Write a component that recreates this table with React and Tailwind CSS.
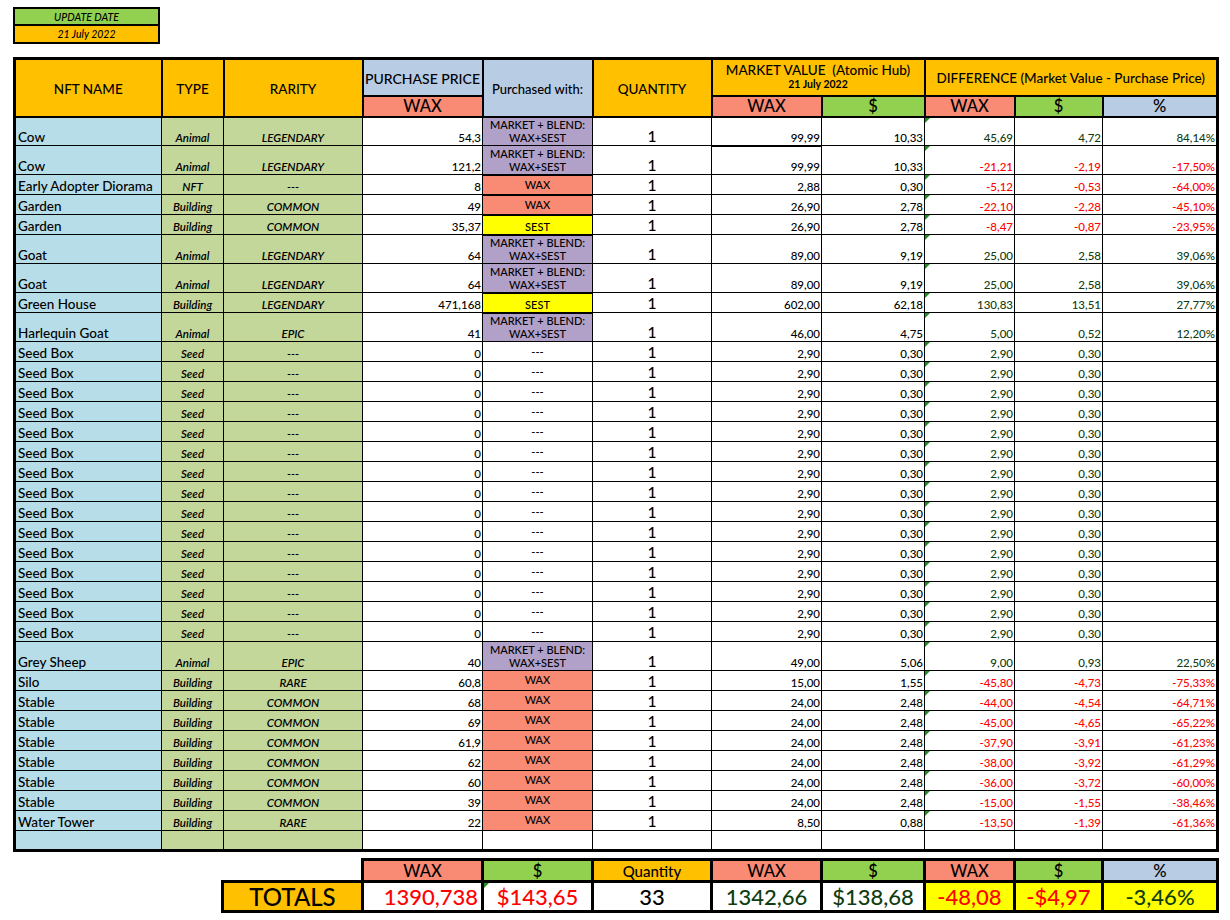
import React from 'react'

const mb = 'mb'

const rows = [
  { n: 'Cow', t: 'Animal', r: 'LEGENDARY', p: '54,3', w: mb, mv: '99,99', md: '10,33', dw: '45,69', dd: '4,72', pc: '84,14%', tall: true },
  { n: 'Cow', t: 'Animal', r: 'LEGENDARY', p: '121,2', w: mb, mv: '99,99', md: '10,33', dw: '-21,21', dd: '-2,19', pc: '-17,50%', tall: true },
  { n: 'Early Adopter Diorama', t: 'NFT', r: '---', p: '8', w: 'WAX', mv: '2,88', md: '0,30', dw: '-5,12', dd: '-0,53', pc: '-64,00%', thick: true },
  { n: 'Garden', t: 'Building', r: 'COMMON', p: '49', w: 'WAX', mv: '26,90', md: '2,78', dw: '-22,10', dd: '-2,28', pc: '-45,10%', thick: true },
  { n: 'Garden', t: 'Building', r: 'COMMON', p: '35,37', w: 'SEST', mv: '26,90', md: '2,78', dw: '-8,47', dd: '-0,87', pc: '-23,95%', thick: true },
  { n: 'Goat', t: 'Animal', r: 'LEGENDARY', p: '64', w: mb, mv: '89,00', md: '9,19', dw: '25,00', dd: '2,58', pc: '39,06%', tall: true },
  { n: 'Goat', t: 'Animal', r: 'LEGENDARY', p: '64', w: mb, mv: '89,00', md: '9,19', dw: '25,00', dd: '2,58', pc: '39,06%', tall: true },
  { n: 'Green House', t: 'Building', r: 'LEGENDARY', p: '471,168', w: 'SEST', mv: '602,00', md: '62,18', dw: '130,83', dd: '13,51', pc: '27,77%', thick: true },
  { n: 'Harlequin Goat', t: 'Animal', r: 'EPIC', p: '41', w: mb, mv: '46,00', md: '4,75', dw: '5,00', dd: '0,52', pc: '12,20%', tall: true },
  ...Array.from({ length: 15 }, () => ({ n: 'Seed Box', t: 'Seed', r: '---', p: '0', w: '---', mv: '2,90', md: '0,30', dw: '2,90', dd: '0,30', pc: '' })),
  { n: 'Grey Sheep', t: 'Animal', r: 'EPIC', p: '40', w: mb, mv: '49,00', md: '5,06', dw: '9,00', dd: '0,93', pc: '22,50%', tall: true },
  { n: 'Silo', t: 'Building', r: 'RARE', p: '60,8', w: 'WAX', mv: '15,00', md: '1,55', dw: '-45,80', dd: '-4,73', pc: '-75,33%' },
  { n: 'Stable', t: 'Building', r: 'COMMON', p: '68', w: 'WAX', mv: '24,00', md: '2,48', dw: '-44,00', dd: '-4,54', pc: '-64,71%' },
  { n: 'Stable', t: 'Building', r: 'COMMON', p: '69', w: 'WAX', mv: '24,00', md: '2,48', dw: '-45,00', dd: '-4,65', pc: '-65,22%' },
  { n: 'Stable', t: 'Building', r: 'COMMON', p: '61,9', w: 'WAX', mv: '24,00', md: '2,48', dw: '-37,90', dd: '-3,91', pc: '-61,23%' },
  { n: 'Stable', t: 'Building', r: 'COMMON', p: '62', w: 'WAX', mv: '24,00', md: '2,48', dw: '-38,00', dd: '-3,92', pc: '-61,29%' },
  { n: 'Stable', t: 'Building', r: 'COMMON', p: '60', w: 'WAX', mv: '24,00', md: '2,48', dw: '-36,00', dd: '-3,72', pc: '-60,00%' },
  { n: 'Stable', t: 'Building', r: 'COMMON', p: '39', w: 'WAX', mv: '24,00', md: '2,48', dw: '-15,00', dd: '-1,55', pc: '-38,46%' },
  { n: 'Water Tower', t: 'Building', r: 'RARE', p: '22', w: 'WAX', mv: '8,50', md: '0,88', dw: '-13,50', dd: '-1,39', pc: '-61,36%' },
]

const tone = (v) => (v.startsWith('-') ? 'text-[#ff0000]' : 'text-[#0f3d0f]')

function Flag() {
  return <span className="absolute top-0 left-0 w-0 h-0 border-t-[5px] border-t-[#1f8f1f] border-r-[5px] border-r-transparent" />
}

function Paid({ w, thick }) {
  const edge = thick ? 'border-y-2' : ''
  if (w === mb)
    return (
      <td className="border border-black bg-[#b1a0c7] text-center text-[11px] leading-[13px] align-middle">
        MARKET + BLEND:
        <br />
        WAX+SEST
      </td>
    )
  if (w === 'WAX')
    return <td className={`border border-black ${edge} bg-[#f98b75] text-center text-[11px] leading-[14px] align-top pt-[2px]`}>WAX</td>
  if (w === 'SEST')
    return <td className={`border border-black ${edge} bg-[#ffff00] text-center text-[11px] leading-[14px] align-bottom`}>SEST</td>
  return <td className="border border-black bg-white text-center text-[11px] leading-[14px] align-middle">---</td>
}

export default function App() {
  const hd = 'border-2 border-black text-center align-middle font-medium'
  const cell = 'border border-black align-bottom leading-[15px]'
  const num = `${cell} text-right pr-[1px] text-[11.5px]`
  return (
    <div className="w-[1230px] h-[920px] bg-white text-black font-medium font-['Lato',sans-serif] overflow-hidden">
      <div className="ml-[13px] pt-[7px] w-[147px]">
        <div className="border-2 border-black text-[10.5px] italic text-center">
          <div className="bg-[#92d050] h-[17px] leading-[16px] border-b-2 border-black">UPDATE DATE</div>
          <div className="bg-[#ffc000] h-[16px] leading-[16px]">21 July 2022</div>
        </div>
      </div>

      <table className="ml-[13px] mt-[13px] w-[1203px] table-fixed border-collapse border-[3px] border-black">
        <colgroup>
          <col className="w-[147px]" />
          <col className="w-[62px]" />
          <col className="w-[139px]" />
          <col className="w-[120px]" />
          <col className="w-[110px]" />
          <col className="w-[119px]" />
          <col className="w-[110px]" />
          <col className="w-[103px]" />
          <col className="w-[90px]" />
          <col className="w-[88px]" />
          <col className="w-[115px]" />
        </colgroup>
        <thead>
          <tr className="h-[37px]">
            <th rowSpan={2} className={`${hd} bg-[#ffc000] text-[13.5px] pt-[3px]`}>NFT NAME</th>
            <th rowSpan={2} className={`${hd} bg-[#ffc000] text-[13.5px] pt-[3px]`}>TYPE</th>
            <th rowSpan={2} className={`${hd} bg-[#ffc000] text-[13.5px] pt-[3px]`}>RARITY</th>
            <th className={`${hd} bg-[#b8cce4] text-[14px] pt-[2px]`}>PURCHASE PRICE</th>
            <th rowSpan={2} className={`${hd} bg-[#b8cce4] text-[13px] pt-[3px]`}>Purchased with:</th>
            <th rowSpan={2} className={`${hd} bg-[#ffc000] text-[13.5px] pt-[3px]`}>QUANTITY</th>
            <th colSpan={2} className={`${hd} bg-[#ffc000] leading-[14px]`}>
              <div className="text-[13.5px]">MARKET VALUE&nbsp; (Atomic Hub)</div>
              <div className="text-[10.5px] font-bold">21 July 2022</div>
            </th>
            <th colSpan={3} className={`${hd} bg-[#ffc000] text-[13.5px] pt-[2px]`}>DIFFERENCE (Market Value - Purchase Price)</th>
          </tr>
          <tr className="h-[21px] text-[16.5px] leading-[18px]">
            <th className={`${hd} bg-[#f98b75]`}>WAX</th>
            <th className={`${hd} bg-[#f98b75]`}>WAX</th>
            <th className={`${hd} bg-[#92d050]`}>$</th>
            <th className={`${hd} bg-[#f98b75]`}>WAX</th>
            <th className={`${hd} bg-[#92d050]`}>$</th>
            <th className={`${hd} bg-[#b8cce4]`}>%</th>
          </tr>
        </thead>
        <tbody>
          {rows.map((r, i) => (
            <tr key={i} className={r.tall ? 'h-[29px]' : 'h-[20px]'}>
              <td className={`${cell} bg-[#b7dee8] text-[13.5px] pl-[2px] whitespace-nowrap`}>{r.n}</td>
              <td className={`${cell} bg-[#c4d79b] text-center italic font-semibold text-[11.5px]`}>{r.t}</td>
              <td className={`${cell} bg-[#c4d79b] text-center italic font-semibold text-[11.5px]`}>{r.r}</td>
              <td className={`${num} bg-white`}>{r.p}</td>
              <Paid w={r.w} thick={r.thick} />
              <td className={`${cell} text-center text-[15.5px] leading-[17px]`}>1</td>
              <td className={`${num} ${i === 0 ? 'border-b-2' : ''}`}>{r.mv}</td>
              <td className={num}>{r.md}</td>
              <td className={`${num} relative ${tone(r.dw)}`}>
                <Flag />
                {r.dw}
              </td>
              <td className={`${num} ${tone(r.dd)}`}>{r.dd}</td>
              <td className={`${num} ${tone(r.pc)}`}>{r.pc}</td>
            </tr>
          ))}
          <tr className="h-[20px]">
            <td className={`${cell} bg-[#b7dee8]`} />
            <td className={`${cell} bg-[#c4d79b]`} />
            <td className={`${cell} bg-[#c4d79b]`} />
            <td className={cell} />
            <td className={cell} />
            <td className={cell} />
            <td className={cell} />
            <td className={cell} />
            <td className={cell} />
            <td className={cell} />
            <td className={cell} />
          </tr>
        </tbody>
      </table>

      <table className="ml-[221px] mt-[6px] w-[995px] table-fixed border-collapse">
        <colgroup>
          <col className="w-[140px]" />
          <col className="w-[120px]" />
          <col className="w-[110px]" />
          <col className="w-[119px]" />
          <col className="w-[110px]" />
          <col className="w-[103px]" />
          <col className="w-[90px]" />
          <col className="w-[88px]" />
          <col className="w-[115px]" />
        </colgroup>
        <tbody>
          <tr className="h-[22px] text-[16.5px] leading-[18px] text-center">
            <td className="border-0" />
            <td className="border-[3px] border-black bg-[#f98b75]">WAX</td>
            <td className="border-[3px] border-black bg-[#92d050]">$</td>
            <td className="border-[3px] border-black bg-[#ffc000] text-[15px]">Quantity</td>
            <td className="border-[3px] border-black bg-[#f98b75]">WAX</td>
            <td className="border-[3px] border-black bg-[#92d050]">$</td>
            <td className="border-[3px] border-black bg-[#f98b75]">WAX</td>
            <td className="border-[3px] border-black bg-[#92d050]">$</td>
            <td className="border-[3px] border-black bg-[#b8cce4]">%</td>
          </tr>
          <tr className="h-[30px] text-[22px] leading-[26px] text-center">
            <td className="border-[3px] border-black bg-[#ffc000] text-[24px]">TOTALS</td>
            <td className="border-[3px] border-black text-[#ff0000] text-right pr-[3px]">1390,738</td>
            <td className="border-[3px] border-black text-[#ff0000] relative">
              <Flag />
              $143,65
            </td>
            <td className="border-[3px] border-black">33</td>
            <td className="border-[3px] border-black text-[#0f3d0f]">1342,66</td>
            <td className="border-[3px] border-black text-[#0f3d0f]">$138,68</td>
            <td className="border-[3px] border-black bg-[#ffff00] text-[#ff0000]">-48,08</td>
            <td className="border-[3px] border-black bg-[#ffff00] text-[#ff0000]">-$4,97</td>
            <td className="border-[3px] border-black bg-[#ffff00] text-[#0f3d0f]">-3,46%</td>
          </tr>
        </tbody>
      </table>
    </div>
  )
}
